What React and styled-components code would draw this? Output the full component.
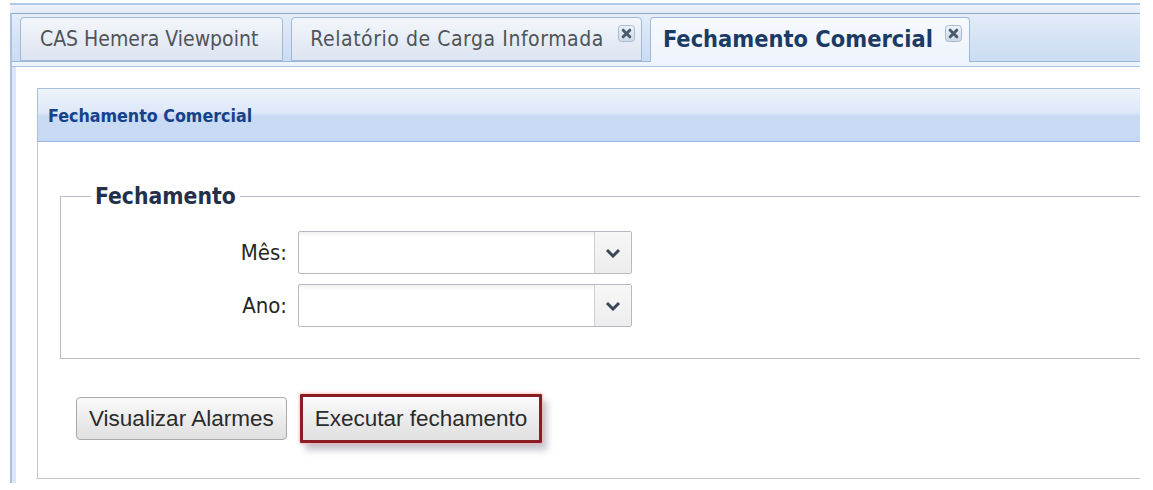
import React from 'react';
import styled, { createGlobalStyle } from 'styled-components';

const GlobalStyle = createGlobalStyle`
  html, body {
    margin: 0;
    padding: 0;
    background: #ffffff;
  }
  body {
    font-family: "DejaVu Sans Condensed", "DejaVu Sans", sans-serif;
  }
`;

const tahoma = `"DejaVu Sans Condensed", "DejaVu Sans", sans-serif`;

const Page = styled.div`
  width: 1153px;
  height: 490px;
  overflow: hidden;
  box-sizing: border-box;
  padding: 3px 13px 0 10px;
`;

const TopBand = styled.div`
  height: 8px;
  border-top: 2px solid #b0c8e8;
  background: linear-gradient(#eef3fb, #e2ebf7);
`;

const TabPanel = styled.div`
  border-left: 2px solid #a9c2e4;
`;

const TabStrip = styled.div`
  display: flex;
  align-items: flex-end;
  gap: 8px;
  padding: 3px 0 0 8px;
  border-top: 1px solid #8fa9cc;
  background: linear-gradient(#e4edf9, #d3e1f4 60%, #cbdcf3);
`;

const Tab = styled.div`
  position: relative;
  z-index: 1;
  display: flex;
  align-items: flex-start;
  box-sizing: border-box;
  height: ${p => (p.$active ? '45px' : '44px')};
  margin-bottom: ${p => (p.$active ? '-1px' : '0')};
  padding: 0 ${p => p.$padRight}px 0 ${p => p.$padLeft}px;
  border: 1px solid ${p => (p.$active ? '#9fb9da' : '#a3b8d3')};
  border-bottom: ${p => (p.$active ? 'none' : '1px solid #a3b8d3')};
  border-radius: 4px 4px 0 0;
  background: ${p =>
    p.$active
      ? 'linear-gradient(#f6f9fe, #eef4fc)'
      : 'linear-gradient(#f3f6fb, #e6ecf5 55%, #dce5f1)'};
`;

const TabText = styled.span`
  font-family: ${tahoma};
  font-size: ${p => (p.$active ? '23.4px' : '21px')};
  font-weight: ${p => (p.$active ? 700 : 400)};
  letter-spacing: ${p => p.$spacing || 0}px;
  color: ${p => (p.$active ? '#1b3b64' : '#505459')};
  line-height: 42px;
  white-space: nowrap;
`;

const CloseBox = styled.svg`
  flex: none;
  margin-top: 7px;
  margin-left: ${p => p.$gap}px;
`;

const TabSpacer = styled.div`
  height: 4px;
  border-top: 1px solid #99b6dc;
  border-bottom: 1px solid #a9c0df;
  background: #eef4fc;
`;

const TabBody = styled.div`
  border-left: 4px solid #dce7f6;
  background: #ffffff;
  padding: 21px 0 4px 21px;
`;

const Panel = styled.div``;

const PanelHeader = styled.div`
  height: 50px;
  border-top: 1px solid #a9c0df;
  border-bottom: 1px solid #99b6dc;
  border-left: 1px solid #a9c0df;
  background: linear-gradient(#edf3fb 0%, #dde8f8 45%, #c9dbf4 52%, #c6d9f4 100%);
  display: flex;
  align-items: center;
  padding-left: 10px;
  padding-top: 2px;
  box-sizing: content-box;
`;

const PanelTitle = styled.span`
  font-family: ${tahoma};
  font-size: 17.7px;
  font-weight: 700;
  color: #15428b;
`;

const PanelBody = styled.div`
  border-left: 1px solid #c6c6c6;
  border-bottom: 1px solid #c6c6c6;
  padding: 42px 0 35px 0;
`;

const FieldSet = styled.fieldset`
  margin: 0 0 0 22px;
  padding: 23px 0 31px 0;
  border: 1px solid #b9bcc6;
  border-right: none;
  min-width: 0;
`;

const Legend = styled.legend`
  margin-left: 30px;
  padding: 0 4px;
  font-family: ${tahoma};
  font-size: 22.7px;
  font-weight: 700;
  line-height: 24px;
  color: #22304a;
`;

const FormRow = styled.div`
  display: flex;
  align-items: center;
  gap: 11px;
  & + & {
    margin-top: 10px;
  }
`;

const FieldLabel = styled.label`
  width: 226px;
  text-align: right;
  font-family: ${tahoma};
  font-size: 22px;
  color: #262626;
`;

const Combo = styled.div`
  display: flex;
  width: 334px;
  height: 43px;
  box-sizing: border-box;
  border: 1px solid #b6b9c2;
  border-radius: 2px;
  background: linear-gradient(#f1f1f1, #ffffff 5px);
`;

const ComboInput = styled.div`
  flex: 1;
`;

const ComboTrigger = styled.div`
  width: 36px;
  display: flex;
  align-items: center;
  justify-content: center;
  border-left: 1px solid #cfcfcf;
  background: linear-gradient(#f7f7f7, #ededed);
`;

const ButtonRow = styled.div`
  display: flex;
  align-items: center;
  gap: 13px;
  margin-top: 35px;
  padding-left: 38px;
`;

const Button = styled.button`
  box-sizing: border-box;
  height: ${p => (p.$highlight ? '49px' : '43px')};
  padding: 0 ${p => (p.$highlight ? '12px' : '12px')};
  font-family: "Liberation Sans", Arial, sans-serif;
  font-size: 22.5px;
  color: #2b2b2b;
  border: ${p => (p.$highlight ? '3px solid #8a1d24' : '1px solid #a8a8a8')};
  border-radius: ${p => (p.$highlight ? '1px' : '4px')};
  background: linear-gradient(#fbfbfb, #ececec 50%, #e0e0e0);
  box-shadow: ${p =>
    p.$highlight
      ? '0 0 3px 1px rgba(255, 170, 170, 0.7), 5px 7px 7px rgba(60, 60, 90, 0.3)'
      : 'none'};
`;

const CloseIcon = ({ gap }) => (
  <CloseBox $gap={gap} width="17" height="17" viewBox="0 0 17 17">
    <defs>
      <linearGradient id="cg" x1="0" y1="0" x2="0" y2="1">
        <stop offset="0" stopColor="#eef3f9" />
        <stop offset="1" stopColor="#cbd8e8" />
      </linearGradient>
    </defs>
    <rect x="0.5" y="0.5" width="16" height="16" rx="3" fill="url(#cg)" stroke="#a9bbd1" />
    <path d="M5.2 5.2 L11.8 11.8 M11.8 5.2 L5.2 11.8" stroke="#4c5b6c" strokeWidth="3" strokeLinecap="round" />
  </CloseBox>
);

const Chevron = () => (
  <svg width="16" height="10" viewBox="0 0 16 10">
    <polyline points="2,2 8,8 14,2" fill="none" stroke="#3b4757" strokeWidth="3" />
  </svg>
);

const tabs = [
  { label: 'CAS Hemera Viewpoint', padLeft: 19, padRight: 24 },
  { label: 'Relatório de Carga Informada', closable: true, padLeft: 18, padRight: 6, gap: 14, spacing: 0.55 },
  { label: 'Fechamento Comercial', closable: true, active: true, padLeft: 12, padRight: 7, gap: 12 },
];

const ComboField = ({ label }) => (
  <FormRow>
    <FieldLabel>{label}</FieldLabel>
    <Combo>
      <ComboInput />
      <ComboTrigger>
        <Chevron />
      </ComboTrigger>
    </Combo>
  </FormRow>
);

export default function App() {
  return (
    <Page>
      <GlobalStyle />
      <TopBand />
      <TabPanel>
        <TabStrip>
          {tabs.map(t => (
            <Tab key={t.label} $active={t.active} $padLeft={t.padLeft} $padRight={t.padRight}>
              <TabText $active={t.active} $spacing={t.spacing}>{t.label}</TabText>
              {t.closable && <CloseIcon gap={t.gap} />}
            </Tab>
          ))}
        </TabStrip>
        <TabSpacer />
        <TabBody>
          <Panel>
            <PanelHeader>
              <PanelTitle>Fechamento Comercial</PanelTitle>
            </PanelHeader>
            <PanelBody>
              <FieldSet>
                <Legend>Fechamento</Legend>
                <ComboField label="Mês:" />
                <ComboField label="Ano:" />
              </FieldSet>
              <ButtonRow>
                <Button>Visualizar Alarmes</Button>
                <Button $highlight>Executar fechamento</Button>
              </ButtonRow>
            </PanelBody>
          </Panel>
        </TabBody>
      </TabPanel>
    </Page>
  );
}
